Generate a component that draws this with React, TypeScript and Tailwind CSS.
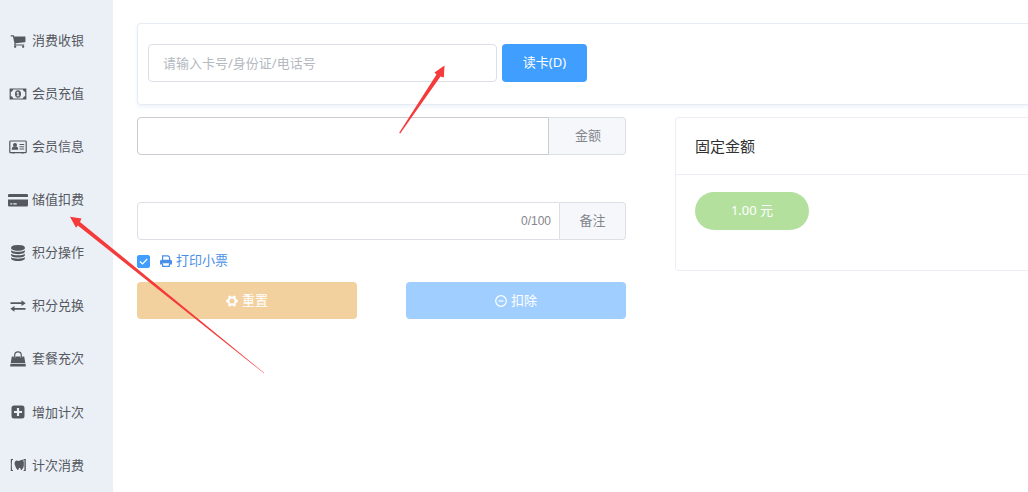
import React, { useState } from 'react';

const CartIcon = () => (
  <svg viewBox="0 0 1792 1792" className="h-4 w-4" fill="currentColor" aria-hidden="true">
    <path d="M704 1536q0 52-38 90t-90 38-90-38-38-90 38-90 90-38 90 38 38 90zm896 0q0 52-38 90t-90 38-90-38-38-90 38-90 90-38 90 38 38 90zm128-1088v512q0 24-16.5 42.5t-40.5 21.5l-1044 122q13 60 13 70 0 16-24 64h920q26 0 45 19t19 45-19 45-45 19h-1024q-26 0-45-19t-19-45q0-11 8-31.5t16-36 21.5-40 15.5-29.5l-177-823h-204q-26 0-45-19t-19-45 19-45 45-19h256q16 0 28.5 6.5t19.5 15.5 13 24.5 8 26 5.5 29.5 4.5 26h1201q26 0 45 19t19 45z" />
  </svg>
);

const MoneyIcon = () => (
  <svg viewBox="0 0 18 12" className="h-3 w-[18px]" aria-hidden="true">
    <path d="M1.200 1h15.600v10H1.200z" fill="none" stroke="currentColor" strokeWidth="1.200" />
    <path d="M1.200 4Q3.800 4 4.200 1H1zM16.800 4q-2.600 0-3-3H17zM1.200 8q2.600 0 3 3H1zM16.800 8q-2.600 0-3 3H17z" fill="currentColor" />
    <path fill="currentColor" fillRule="evenodd" d="M9 2.300a3 3.700 0 1 1 0 7.400a3 3.700 0 1 1 0-7.400zM8.600 3.700 7.300 4.800l.5.600.6-.4v2.500h-.9v.8h3v-.8h-.9V3.700z" />
  </svg>
);

const MemberCardIcon = () => (
  <svg viewBox="0 0 18 14" className="h-3.5 w-[18px]" aria-hidden="true">
    <path d="M1.600 1h14.800q.8 0 .8.800v10.100q0 .8-.8.8H1.600q-.8 0-.8-.8V1.800q0-.8.8-.8z" fill="none" stroke="currentColor" strokeWidth="1.200" />
    <path d="M10.500 4.500h4.700M10.500 6.800h4.700M10.500 9h4.700" stroke="currentColor" />
    <circle cx="6" cy="5" r="2" fill="currentColor" />
    <path d="M4.400 6.500q1.600 1.300 3.200 0 1.700.5 1.700 3.300H2.700q0-2.800 1.700-3.300zM3.500 12.500h2v1h-2zM12.500 12.500h2v1h-2z" fill="currentColor" />
  </svg>
);

const CardIcon = () => (
  <svg viewBox="0 0 20 14" className="h-3.5 w-5" fill="currentColor" aria-hidden="true">
    <path d="M1.200 1h17.600q1.200 0 1.200 1.200V4H0V2.200Q0 1 1.200 1z" />
    <path fillRule="evenodd" d="M0 6.500h20v5.700q0 1.300-1.200 1.300H1.200Q0 13.500 0 12.200zM2.300 10.200v1.200h2v-1.200zM5.300 10.200v1.200h3.400v-1.200z" />
  </svg>
);

const CoinsIcon = () => (
  <svg viewBox="0 0 1792 1792" className="h-4 w-4" fill="currentColor" aria-hidden="true">
    <path d="M896 768q237 0 443-43t325-127v170q0 69-103 128t-280 93.5-385 34.5-385-34.5-280-93.5-103-128v-170q119 84 325 127t443 43zm0 768q237 0 443-43t325-127v170q0 69-103 128t-280 93.5-385 34.5-385-34.5-280-93.5-103-128v-170q119 84 325 127t443 43zm0-384q237 0 443-43t325-127v170q0 69-103 128t-280 93.5-385 34.5-385-34.5-280-93.5-103-128v-170q119 84 325 127t443 43zm0-1152q208 0 385 34.5t280 93.5 103 128v128q0 69-103 128t-280 93.5-385 34.5-385-34.5-280-93.5-103-128v-128q0-69 103-128t280-93.5 385-34.5z" />
  </svg>
);

const ExchangeIcon = () => (
  <svg viewBox="0 0 16 12" className="h-3 w-4" fill="currentColor" aria-hidden="true">
    <path d="M.5 2.300h11V.3L15.700 3.200 11.500 6.100V4.100H.5z" />
    <path d="M15.500 7.900h-11v-2L.3 8.800l4.200 2.900v-2h11z" />
  </svg>
);

const BagIcon = () => (
  <svg viewBox="0 0 16 16" className="h-4 w-4" fill="currentColor" aria-hidden="true">
    <path d="M4.700 7V4.200a3.300 3.300 0 0 1 6.600 0V7" fill="none" stroke="currentColor" strokeWidth="1.200" />
    <path d="M1.800 5.600h2v1.200h1.700V5.600h5v1.200h1.700V5.600h2l1.100 6.500H.7z" />
    <path d="M.5 12.800h15l.4 2.700H.1z" />
  </svg>
);

const PlusIcon = () => (
  <svg viewBox="0 0 14 14" className="h-3.5 w-3.5" fill="currentColor" aria-hidden="true">
    <path fillRule="evenodd" d="M3 .5h8q2.500 0 2.500 2.500v8q0 2.500-2.500 2.500H3Q.5 13.500.5 11V3Q.5.5 3 .5zM5.900 3v2.900H3v2.200h2.900V11h2.200V8.100H11V5.900H8.100V3z" />
  </svg>
);

const ToothIcon = () => (
  <svg viewBox="0 0 16 14" className="h-3.5 w-4" fill="currentColor" aria-hidden="true">
    <path d="M3 1H.8v12H3v-.9h-.9q-.7-5.100 0-10.200H3zM13.600 1h2.200v12h-2.200v-.9h.8V1.900h-.8z" />
    <path d="M4.800 4q1.500-2.400 3.800-.9 1.700-.8 4.700-1.600.9 3.300.5 6.500-.4 2.900-2.400 4.200-1-.3-1.100-2.100-.9-.7-1.300.2-.4 2-1.400 1.700-1.800-1.200-2.300-3.900Q4 6 4.800 4z" />
  </svg>
);

const PrinterIcon = () => (
  <svg viewBox="0 0 12 12" className="h-3 w-3" aria-hidden="true">
    <path d="M2.600 5V.8h5.500l1.500 1.500V5M2.600 8.600v2.700h6.800V8.600" fill="none" stroke="currentColor" strokeWidth="1.200" />
    <path d="M1.500 4.700h9q1.500 0 1.500 1.500v3.400H9.400V8.200H2.600v1.400H0V6.200q0-1.500 1.500-1.500z" fill="currentColor" />
  </svg>
);

const GearIcon = () => (
  <svg viewBox="0 0 12 12" className="h-3 w-3" aria-hidden="true">
    <circle cx="6" cy="6" r="3.600" fill="none" stroke="currentColor" strokeWidth="2" />
    <g fill="currentColor">
      <circle cx="1.500" cy="6" r="1.500" />
      <circle cx="10.500" cy="6" r="1.500" />
      <circle cx="3.700" cy="2.100" r="1.500" />
      <circle cx="8.300" cy="2.100" r="1.500" />
      <circle cx="3.700" cy="9.900" r="1.500" />
      <circle cx="8.300" cy="9.900" r="1.500" />
    </g>
  </svg>
);

const MinusIcon = () => (
  <svg viewBox="0 0 12 12" className="h-3 w-3" fill="none" stroke="currentColor" strokeWidth="1.200" aria-hidden="true">
    <circle cx="6" cy="6" r="5.300" />
    <path d="M3.500 6h5" />
  </svg>
);

const menuItems = [
  { label: '消费收银', icon: <CartIcon /> },
  { label: '会员充值', icon: <MoneyIcon /> },
  { label: '会员信息', icon: <MemberCardIcon /> },
  { label: '储值扣费', icon: <CardIcon /> },
  { label: '积分操作', icon: <CoinsIcon /> },
  { label: '积分兑换', icon: <ExchangeIcon /> },
  { label: '套餐充次', icon: <BagIcon /> },
  { label: '增加计次', icon: <PlusIcon /> },
  { label: '计次消费', icon: <ToothIcon /> },
];

const Sidebar = () => (
  <nav className="flex min-h-screen w-[113px] shrink-0 flex-col bg-[#ebf0f7] pt-3.5 text-[#55585e]">
    {menuItems.map((item) => (
      <a key={item.label} href="#" className="flex flex-1 items-center gap-1 pl-2">
        <span className="flex w-5 shrink-0 justify-center">{item.icon}</span>
        {item.label}
      </a>
    ))}
  </nav>
);

const SearchCard = () => {
  const [keyword, setKeyword] = useState('');

  return (
    <div className="flex h-[82px] items-start gap-[5px] rounded-l border border-r-0 border-[#e6ebf5] pt-5 pl-2.5 shadow-[0_2px_4px_#edf1f9]">
      <input
        type="text"
        aria-label="会员查询"
        value={keyword}
        onChange={(e) => setKeyword(e.target.value)}
        placeholder="请输入卡号/身份证/电话号"
        className="h-[38px] w-[349px] rounded border border-[#dcdfe6] px-3.5 outline-none placeholder:text-[#b4b8c0]"
      />
      <button type="button" className="h-[38px] w-[85px] rounded bg-[#409eff] text-white">
        读卡(D)
      </button>
    </div>
  );
};

const DeductForm = () => {
  const [amount, setAmount] = useState('');
  const [remark, setRemark] = useState('');
  const [print, setPrint] = useState(true);

  return (
    <form className="w-[489px] shrink-0">
      <div className="flex h-[38px]">
        <input
          id="amount"
          type="text"
          value={amount}
          onChange={(e) => setAmount(e.target.value)}
          className="min-w-0 flex-1 rounded-l border border-[#c8cbd2] px-3.5 outline-none"
        />
        <label htmlFor="amount" className="flex w-[77px] items-center justify-center rounded-r border border-l-0 border-[#dcdfe6] bg-[#f5f7fa] pl-0.5 text-[#83868d]">
          金额
        </label>
      </div>

      {/* 备注，最多 100 字 */}
      <div className="mt-[47px] flex h-[38px]">
        <div className="flex min-w-0 flex-1 items-center rounded-l border border-[#dcdfe6] pr-2">
          <input
            id="remark"
            type="text"
            maxLength={100}
            value={remark}
            onChange={(e) => setRemark(e.target.value)}
            className="h-full min-w-0 flex-1 px-3.5 outline-none"
          />
          <span className="font-['Liberation_Sans',sans-serif] text-xs text-[#83868d]">{remark.length}/100</span>
        </div>
        <label htmlFor="remark" className="flex w-[66px] items-center justify-center rounded-r border border-l-0 border-[#dcdfe6] bg-[#f5f7fa] text-[#83868d]">
          备注
        </label>
      </div>

      <label className="flex h-[42px] w-fit items-center text-[#4a90e8]">
        <span className="relative mr-2.5 h-[13px] w-[13px]">
          <input
            type="checkbox"
            checked={print}
            onChange={(e) => setPrint(e.target.checked)}
            className="block h-[13px] w-[13px] appearance-none rounded-xs border border-[#409eff] checked:bg-[#409eff]"
          />
          {print && (
            <svg viewBox="0 0 13 13" className="pointer-events-none absolute inset-0" fill="none" stroke="#fff" strokeWidth="1.200" aria-hidden="true">
              <path d="M3 6.500 5.500 9l4.700-5" />
            </svg>
          )}
        </span>
        <PrinterIcon />
        <span className="ml-1">打印小票</span>
      </label>

      <div className="grid grid-cols-2 gap-[49px] text-white">
        <button type="button" className="flex h-[37px] items-center justify-center gap-1 rounded bg-[#f3d19e]">
          <GearIcon />
          重置
        </button>
        <button type="button" className="flex h-[37px] items-center justify-center gap-1 rounded bg-[#a0cfff]">
          <MinusIcon />
          扣除
        </button>
      </div>
    </form>
  );
};

const FixedAmount = () => (
  <section className="h-[154px] min-w-0 flex-1 rounded-l border border-r-0 border-[#ebeef5]">
    <h2 className="flex h-[57px] items-center border-b border-[#ebeef5] pl-[19px] text-[15px] text-[#303133]">固定金额</h2>
    <div className="pt-[17px] pl-[19px]">
      <button type="button" className="h-[38px] w-[114px] rounded-full bg-[#b3e19d] text-white">
        1.00 元
      </button>
    </div>
  </section>
);

// 操作指引箭头
const GuideArrows = () => (
  <svg width="460" height="380" className="pointer-events-none absolute top-0 left-0" fill="#f43a3a" aria-hidden="true">
    <path d="M399.200 132.800 436.500 74.500 434.500 72.500 444.500 65.500 443.800 77.500 440.500 76.500 400.200 133.500z" />
    <path d="M264.300 373.500 77.800 225.500 76 227.700 70 216.800 81.500 218.500 80 221.900 264 372.700z" />
  </svg>
);

export default function App() {
  return (
    <div className="relative flex min-h-screen overflow-hidden bg-white font-['Noto_Sans','Noto_Sans_CJK_SC',sans-serif] text-[13px]">
      <Sidebar />
      <main className="min-w-0 flex-1 pt-[23px] pl-6">
        <SearchCard />
        <div className="mt-3 flex items-start gap-[49px]">
          <DeductForm />
          <FixedAmount />
        </div>
      </main>
      <GuideArrows />
    </div>
  );
}
